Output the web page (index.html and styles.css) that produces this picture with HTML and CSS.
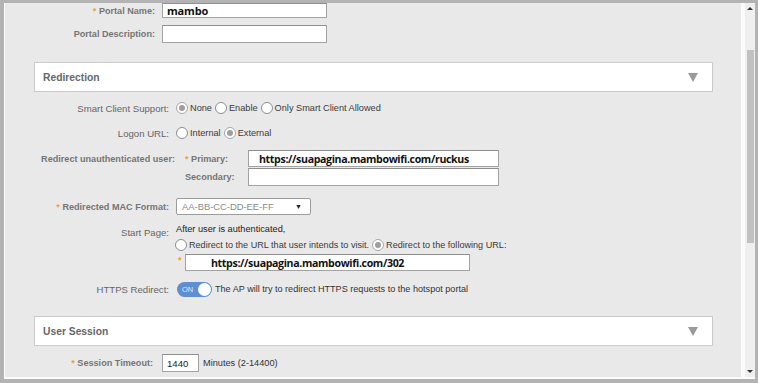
FILE: index.html
```html
<!DOCTYPE html>
<html>
<head>
<meta charset="utf-8">
<link rel="stylesheet" href="styles.css">
</head>
<body>
<div class="frame">
  <div class="content">
    <div class="row r-name">
      <div class="lbl lbl-top b"><span class="req">*</span> Portal Name:</div>
      <div class="inp inp-name">mambo</div>
    </div>
    <div class="row r-desc">
      <div class="lbl lbl-top b">Portal Description:</div>
      <div class="inp inp-desc"></div>
    </div>

    <div class="section-head h1">
      <span class="title">Redirection</span>
      <span class="caret"></span>
    </div>

    <div class="row r-smart">
      <div class="lbl lbl-mid">Smart Client Support:</div>
      <div class="ctrls">
        <span class="radio on"></span><span class="opt">None</span>
        <span class="radio"></span><span class="opt">Enable</span>
        <span class="radio"></span><span class="opt">Only Smart Client Allowed</span>
      </div>
    </div>
    <div class="row r-logon">
      <div class="lbl lbl-mid">Logon URL:</div>
      <div class="ctrls">
        <span class="radio"></span><span class="opt">Internal</span>
        <span class="radio on"></span><span class="opt">External</span>
      </div>
    </div>
    <div class="row r-primary">
      <div class="lbl lbl-redir b">Redirect unauthenticated user:</div>
      <div class="sublbl b"><span class="req">*</span> Primary:</div>
      <div class="inp inp-url url">https://suapagina.mambowifi.com/ruckus</div>
    </div>
    <div class="row r-secondary">
      <div class="lbl lbl-redir"></div>
      <div class="sublbl b">Secondary:</div>
      <div class="inp inp-url2"></div>
    </div>
    <div class="row r-mac">
      <div class="lbl lbl-mid b"><span class="req">*</span> Redirected MAC Format:</div>
      <div class="select"><span>AA-BB-CC-DD-EE-FF</span><span class="sel-caret">▼</span></div>
    </div>
    <div class="row r-start">
      <div class="lbl lbl-mid lbl-start">Start Page:</div>
      <div class="start-col">
        <div class="line1">After user is authenticated,</div>
        <div class="line2">
          <span class="radio"></span><span class="opt">Redirect to the URL that user intends to visit.</span>
          <span class="radio on"></span><span class="opt">Redirect to the following URL:</span>
        </div>
        <div class="line3">
          <span class="req req-in">*</span>
          <div class="inp inp-302 url">https://suapagina.mambowifi.com/302</div>
        </div>
      </div>
    </div>
    <div class="row r-https">
      <div class="lbl lbl-mid">HTTPS Redirect:</div>
      <div class="toggle"><span class="on-txt">ON</span><span class="knob"></span></div>
      <span class="opt toggle-txt">The AP will try to redirect HTTPS requests to the hotspot portal</span>
    </div>

    <div class="section-head h2">
      <span class="title">User Session</span>
      <span class="caret"></span>
    </div>

    <div class="row r-session">
      <div class="lbl lbl-sess b"><span class="req">*</span> Session Timeout:</div>
      <div class="inp inp-sess">1440</div>
      <span class="opt minutes">Minutes (2-14400)</span>
    </div>
  </div>
  <div class="scrollbar">
    <div class="track">
      <span class="arrow up"></span>
      <div class="thumb"></div>
      <span class="arrow down"></span>
    </div>
  </div>
</div>
</body>
</html>
```

FILE: styles.css
```css
html, body {
  margin: 0;
  padding: 0;
}
body {
  width: 758px;
  height: 383px;
  overflow: hidden;
  background: #b3b3b3;
  font-family: "Liberation Sans", Arial, sans-serif;
}
.frame {
  margin: 3px 3px 0 4px;
  height: 374px;
  display: flex;
  border-left: 1px solid #fdfdfd;
  border-bottom: 2px solid #fbfbfb;
}
.content {
  flex: 1;
  background: #e9e9e9;
  overflow: hidden;
  display: flex;
  flex-direction: column;
}
.row {
  display: flex;
  align-items: center;
  flex-shrink: 0;
}
.lbl {
  text-align: right;
  color: #666;
  font-size: 9.6px;
  white-space: nowrap;
  flex-shrink: 0;
}
.lbl.b, .sublbl.b {
  font-weight: bold;
  font-size: 9.1px;
  color: #757575;
}
.req {
  color: #f0a030;
  font-weight: bold;
}
.lbl-top { width: 150px; margin-right: 7px; }
.lbl-mid { width: 164px; margin-right: 7px; }
.lbl-redir { width: 170px; margin-right: 10px; }
.lbl-sess { width: 148px; margin-right: 9px; }
.sublbl {
  width: 63px;
  white-space: nowrap;
  flex-shrink: 0;
}
.inp {
  box-sizing: border-box;
  background: #fff;
  border: 1px solid #a3a3a3;
  border-top-color: #8f8f8f;
  display: flex;
  align-items: center;
  white-space: nowrap;
  color: #111;
}
.url, .inp-name {
  font-family: "Open Sans", sans-serif;
  font-weight: 700;
  font-size: 10.6px;
  letter-spacing: -0.35px;
}
.inp-name { font-size: 11px; letter-spacing: -0.2px; }
.r-name { height: 15px; }
.inp-name { width: 165px; height: 15px; padding-left: 4px; }
.r-desc { margin-top: 7px; height: 18px; }
.inp-desc { width: 165px; height: 18px; }

.section-head {
  box-sizing: border-box;
  flex-shrink: 0;
  height: 30px;
  margin: 0 28px 0 29px;
  background: #fff;
  border: 1px solid #cacaca;
  display: flex;
  align-items: center;
  justify-content: space-between;
  padding: 0 14px 0 8px;
}
.h1 { margin-top: 19px; }
.h2 { margin-top: 19px; }
.title {
  font-size: 10.3px;
  font-weight: bold;
  color: #666;
}
.caret {
  width: 0;
  height: 0;
  border-left: 5.5px solid transparent;
  border-right: 5.5px solid transparent;
  border-top: 9px solid #9a9a9a;
}

.ctrls {
  display: flex;
  align-items: center;
}
.radio {
  box-sizing: border-box;
  width: 12px;
  height: 12px;
  border-radius: 50%;
  border: 1px solid #8c8c8c;
  background: #fff;
  flex-shrink: 0;
  position: relative;
  margin-right: 2px;
}
.radio.on {
  border-color: #a8a8a8;
}
.radio.on::after {
  content: "";
  position: absolute;
  left: 2px;
  top: 2px;
  width: 6px;
  height: 6px;
  border-radius: 50%;
  background: #9e9e9e;
}
.opt {
  font-size: 9.2px;
  color: #3a3a3a;
  margin-right: 3px;
  white-space: nowrap;
}
.r-smart { margin-top: 8px; height: 16px; }
.r-logon { margin-top: 9px; height: 16px; }
.r-primary { margin-top: 9px; height: 17px; }
.inp-url { width: 251px; height: 17px; padding-left: 10px; }
.r-secondary { margin-top: 1px; height: 18px; }
.inp-url2 { width: 251px; height: 18px; }

.r-mac { margin-top: 12px; height: 17px; }
.select {
  box-sizing: border-box;
  width: 135px;
  height: 17px;
  border: 1px solid #9c9c9c;
  border-radius: 2px;
  background: #fff;
  display: flex;
  align-items: center;
  justify-content: space-between;
  padding: 0 8px 0 5px;
  font-size: 9.4px;
  color: #8a8a8a;
}
.sel-caret {
  font-size: 7px;
  color: #222;
}

.r-start {
  margin-top: 7px;
  align-items: flex-start;
}
.lbl-start {
  padding-top: 5px;
}
.start-col {
  display: flex;
  flex-direction: column;
}
.line1 {
  height: 14px;
  display: flex;
  align-items: center;
  font-size: 9.2px;
  color: #222;
}
.line2 {
  margin-top: 2px;
  height: 14px;
  display: flex;
  align-items: center;
  margin-left: -1px;
}
.line2 .opt { margin-right: 3px; font-size: 9.1px; }
.line3 {
  margin-top: 2px;
  display: flex;
  align-items: flex-start;
}
.req-in {
  font-size: 9px;
  width: 7px;
  margin-left: 2px;
  line-height: 12px;
}
.inp-302 { width: 285px; height: 17px; padding-left: 25px; }

.r-https { margin-top: 10px; height: 16px; }
.toggle {
  box-sizing: border-box;
  width: 35px;
  height: 15px;
  border-radius: 8px;
  background: #5f8fd2;
  display: flex;
  align-items: center;
  justify-content: space-between;
  padding: 0 1px 0 5px;
  margin-right: 3px;
  margin-left: 1px;
}
.on-txt {
  font-size: 7.5px;
  color: #dfe8f6;
}
.knob {
  width: 13px;
  height: 13px;
  border-radius: 50%;
  background: #fff;
}
.toggle-txt { color: #333; font-size: 9.1px; }

.r-session { margin-top: 8px; height: 18px; }
.inp-sess {
  width: 37px;
  height: 18px;
  padding-left: 4px;
  font-size: 9.6px;
  color: #222;
  margin-right: 4px;
}
.minutes { color: #333; }

.scrollbar {
  width: 10px;
  border-left: 4px solid #fbfbfb;
  background: #efefef;
  flex-shrink: 0;
}
.track {
  height: 100%;
  display: flex;
  flex-direction: column;
  align-items: center;
}
.arrow {
  width: 0;
  height: 0;
  border-left: 3px solid transparent;
  border-right: 3px solid transparent;
}
.arrow.up {
  margin-top: 4px;
  border-bottom: 3px solid #333;
}
.arrow.down {
  margin-top: auto;
  margin-bottom: 4px;
  border-top: 3px solid #333;
}
.thumb {
  margin-top: 40px;
  width: 7px;
  height: 193px;
  background: #c1c1c1;
  align-self: flex-end;
  margin-right: 1px;
}
```
